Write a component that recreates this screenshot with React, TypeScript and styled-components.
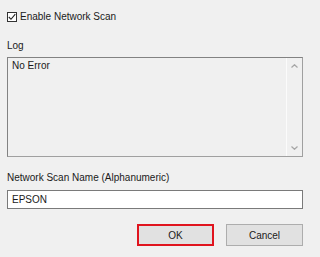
import React from "react";
import styled, { createGlobalStyle } from "styled-components";

const Global = createGlobalStyle`
  html, body {
    margin: 0;
    padding: 0;
    background: #f0f0f0;
  }
  body {
    font-family: "Liberation Sans", Arial, sans-serif;
    font-size: 10px;
    color: #1a1a1a;
  }
`;

const Dialog = styled.div`
  width: 320px;
  height: 257px;
  box-sizing: border-box;
  padding: 11px 17px 0 7px;
  display: flex;
  flex-direction: column;
`;

const CheckRow = styled.label`
  display: flex;
  align-items: center;
  gap: 3px;
  height: 12px;
  line-height: 12px;
`;

const Box = styled.span`
  width: 10px;
  height: 10px;
  box-sizing: border-box;
  border: 1px solid #333;
  background: #fff;
  display: flex;
  align-items: center;
  justify-content: center;
`;

const Label = styled.div<{ $top: number }>`
  margin-top: ${(p) => p.$top}px;
  height: 12px;
  line-height: 12px;
`;

const LogBox = styled.div`
  margin-top: 5px;
  height: 100px;
  box-sizing: border-box;
  border: 1px solid #828282;
  border-right-color: #a0a0a0;
  border-bottom-color: #a0a0a0;
  display: flex;
`;

const LogText = styled.div`
  flex: 1;
  padding: 2px 0 0 4px;
  line-height: 12px;
`;

const ScrollBar = styled.div`
  width: 15px;
  border-left: 1px solid #fbfbfb;
  display: flex;
  flex-direction: column;
  justify-content: space-between;
  align-items: center;
  padding: 6px 0 6px;
`;

const TextInput = styled.div`
  margin-top: 6px;
  height: 19px;
  box-sizing: border-box;
  border: 1px solid #7a7a7a;
  background: #fff;
  padding-left: 4px;
  line-height: 17px;
`;

const Buttons = styled.div`
  margin-top: 15px;
  display: flex;
  justify-content: flex-end;
  gap: 12px;
`;

const Button = styled.div<{ $default?: boolean }>`
  width: 77px;
  height: 22px;
  box-sizing: border-box;
  background: #e1e1e1;
  border: ${(p) => (p.$default ? "2px solid #e0141e" : "1px solid #adadad")};
  display: flex;
  align-items: center;
  justify-content: center;
`;

const Chevron = ({ up }: { up?: boolean }) => (
  <svg width="7" height="4" viewBox="0 0 7 4">
    <path
      d={up ? "M0.5 3.5 L3.5 0.7 L6.5 3.5" : "M0.5 0.5 L3.5 3.3 L6.5 0.5"}
      fill="none"
      stroke="#a6a6a6"
      strokeWidth="1.2"
    />
  </svg>
);

export default function App() {
  return (
    <>
      <Global />
      <Dialog>
        <CheckRow>
          <Box>
            <svg width="8" height="8" viewBox="0 0 8 8">
              <path d="M0.8 4 L3 6.3 L7.3 1.2" fill="none" stroke="#222" strokeWidth="1.1" />
            </svg>
          </Box>
          Enable Network Scan
        </CheckRow>
        <Label $top={17}>Log</Label>
        <LogBox>
          <LogText>No Error</LogText>
          <ScrollBar>
            <Chevron up />
            <Chevron />
          </ScrollBar>
        </LogBox>
        <Label $top={15}>Network Scan Name (Alphanumeric)</Label>
        <TextInput>EPSON</TextInput>
        <Buttons>
          <Button $default>OK</Button>
          <Button>Cancel</Button>
        </Buttons>
      </Dialog>
    </>
  );
}
